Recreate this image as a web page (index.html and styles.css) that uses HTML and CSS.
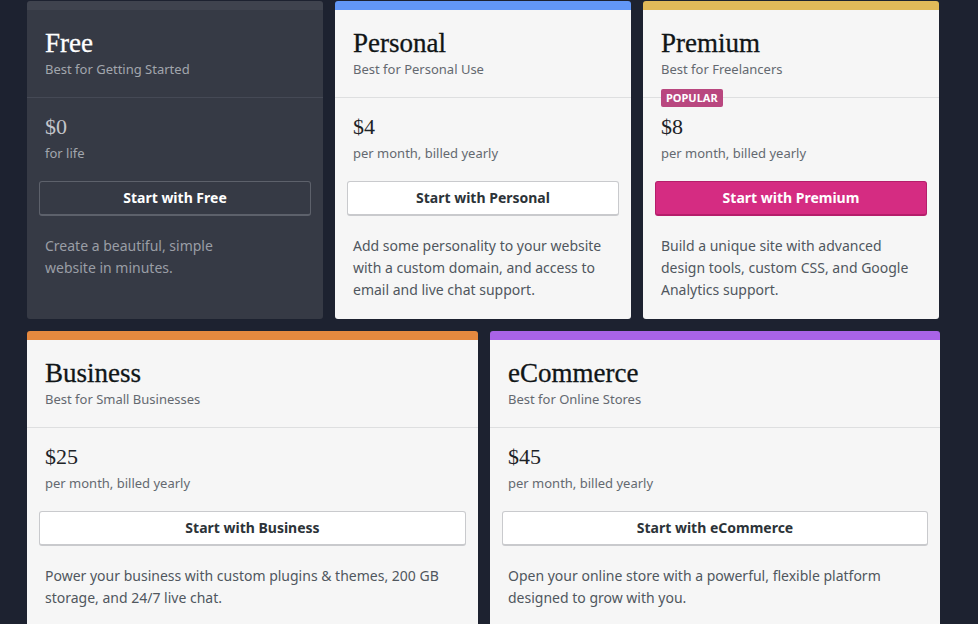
FILE: index.html
```html
<!DOCTYPE html>
<html lang="en">
<head>
<meta charset="utf-8">
<title>Plans</title>
<link rel="stylesheet" href="styles.css">
</head>
<body>
<main class="plans">
  <div class="row row-3">
    <section class="card card-dark">
      <header class="card-head">
        <h2 class="title">Free</h2>
        <p class="tagline">Best for Getting Started</p>
      </header>
      <div class="card-body">
        <div class="price">$0</div>
        <div class="term">for life</div>
        <button class="btn btn-ghost">Start with Free</button>
        <p class="desc">Create a beautiful, simple<br>website in minutes.</p>
      </div>
    </section>
    <section class="card band-blue">
      <header class="card-head">
        <h2 class="title">Personal</h2>
        <p class="tagline">Best for Personal Use</p>
      </header>
      <div class="card-body">
        <div class="price">$4</div>
        <div class="term">per month, billed yearly</div>
        <button class="btn">Start with Personal</button>
        <p class="desc">Add some personality to your website with a custom domain, and access to email and live chat support.</p>
      </div>
    </section>
    <section class="card band-yellow">
      <span class="badge">POPULAR</span>
      <header class="card-head">
        <h2 class="title">Premium</h2>
        <p class="tagline">Best for Freelancers</p>
      </header>
      <div class="card-body">
        <div class="price">$8</div>
        <div class="term">per month, billed yearly</div>
        <button class="btn btn-primary">Start with Premium</button>
        <p class="desc">Build a unique site with advanced design tools, custom CSS, and Google Analytics support.</p>
      </div>
    </section>
  </div>
  <div class="row row-2">
    <section class="card band-orange">
      <header class="card-head">
        <h2 class="title">Business</h2>
        <p class="tagline">Best for Small Businesses</p>
      </header>
      <div class="card-body">
        <div class="price">$25</div>
        <div class="term">per month, billed yearly</div>
        <button class="btn">Start with Business</button>
        <p class="desc">Power your business with custom plugins &amp; themes, 200 GB storage, and 24/7 live chat.</p>
      </div>
    </section>
    <section class="card band-purple">
      <header class="card-head">
        <h2 class="title">eCommerce</h2>
        <p class="tagline">Best for Online Stores</p>
      </header>
      <div class="card-body">
        <div class="price">$45</div>
        <div class="term">per month, billed yearly</div>
        <button class="btn">Start with eCommerce</button>
        <p class="desc">Open your online store with a powerful, flexible platform designed to grow with you.</p>
      </div>
    </section>
  </div>
</main>
</body>
</html>
```
FILE: styles.css
```css
* { box-sizing: border-box; }
html, body {
  margin: 0;
  background: #1d2230;
  font-family: "Noto Sans", "Open Sans", sans-serif;
  overflow: hidden;
}
.plans {
  width: 913px;
  margin-left: 27px;
  padding-top: 1px;
  display: flex;
  flex-direction: column;
  gap: 12px;
}
.row {
  display: grid;
  gap: 12px;
}
.row-3 { grid-template-columns: 296px 296px 296px; }
.row-2 { grid-template-columns: 451px 450px; }

.card {
  position: relative;
  background: #f6f6f6;
  border-radius: 3px;
  border-top: 9px solid #dcdcde;
}
.band-blue { border-top-color: #6297f7; }
.band-yellow { border-top-color: #e1b959; }
.band-orange { border-top-color: #e5893f; }
.band-purple { border-top-color: #a963e6; }

.card-head {
  padding: 17px 18px 18px;
  border-bottom: 1px solid #dedfe0;
}
.title {
  margin: 0;
  font-family: "Liberation Serif", "Times New Roman", serif;
  font-weight: 400;
  font-size: 27px;
  line-height: 32px;
  color: #101517;
  -webkit-text-stroke: 0.3px currentColor;
}
.tagline {
  margin: 0;
  font-size: 13px;
  line-height: 20px;
  color: #646970;
}
.card-body {
  padding: 15px 18px 18px;
  display: flex;
  flex-direction: column;
}
.price {
  font-family: "Liberation Serif", "Times New Roman", serif;
  font-size: 22px;
  line-height: 28px;
  color: #1d2327;
}
.term {
  margin-top: 2px;
  font-size: 13px;
  line-height: 20px;
  color: #646970;
}
.btn {
  margin: 18px -6px 0;
  height: 35px;
  background: #ffffff;
  border: 1px solid #c9cacd;
  border-bottom-width: 2px;
  border-radius: 3px;
  font-family: "Noto Sans", "Open Sans", sans-serif;
  font-weight: 700;
  font-size: 14px;
  line-height: 30px;
  color: #2c3338;
  padding: 0;
  cursor: pointer;
}
.btn-primary {
  background: #d52c82;
  border-color: #b51e6b;
  color: #ffffff;
}
.desc {
  margin: 19px 0 0;
  font-size: 14px;
  line-height: 22px;
  color: #50575e;
}

.badge {
  position: absolute;
  top: 79px;
  left: 18px;
  height: 18px;
  padding: 0 5px;
  background: #b9477f;
  color: #ffffff;
  border-radius: 2px;
  font-size: 11px;
  font-weight: 700;
  line-height: 18px;
  z-index: 1;
}

/* dark free card */
.card-dark {
  background: #363a45;
  border-top-color: #3f434e;
}
.card-dark .card-head { border-bottom-color: #454955; }
.card-dark .title { color: #ffffff; }
.card-dark .tagline { color: #a2a6ad; }
.card-dark .price { color: #c3c5ca; }
.card-dark .term { color: #a2a6ad; }
.card-dark .desc { color: #9a9ea6; }
.btn-ghost {
  background: transparent;
  border-color: #5d616b;
  color: #ffffff;
}
```
